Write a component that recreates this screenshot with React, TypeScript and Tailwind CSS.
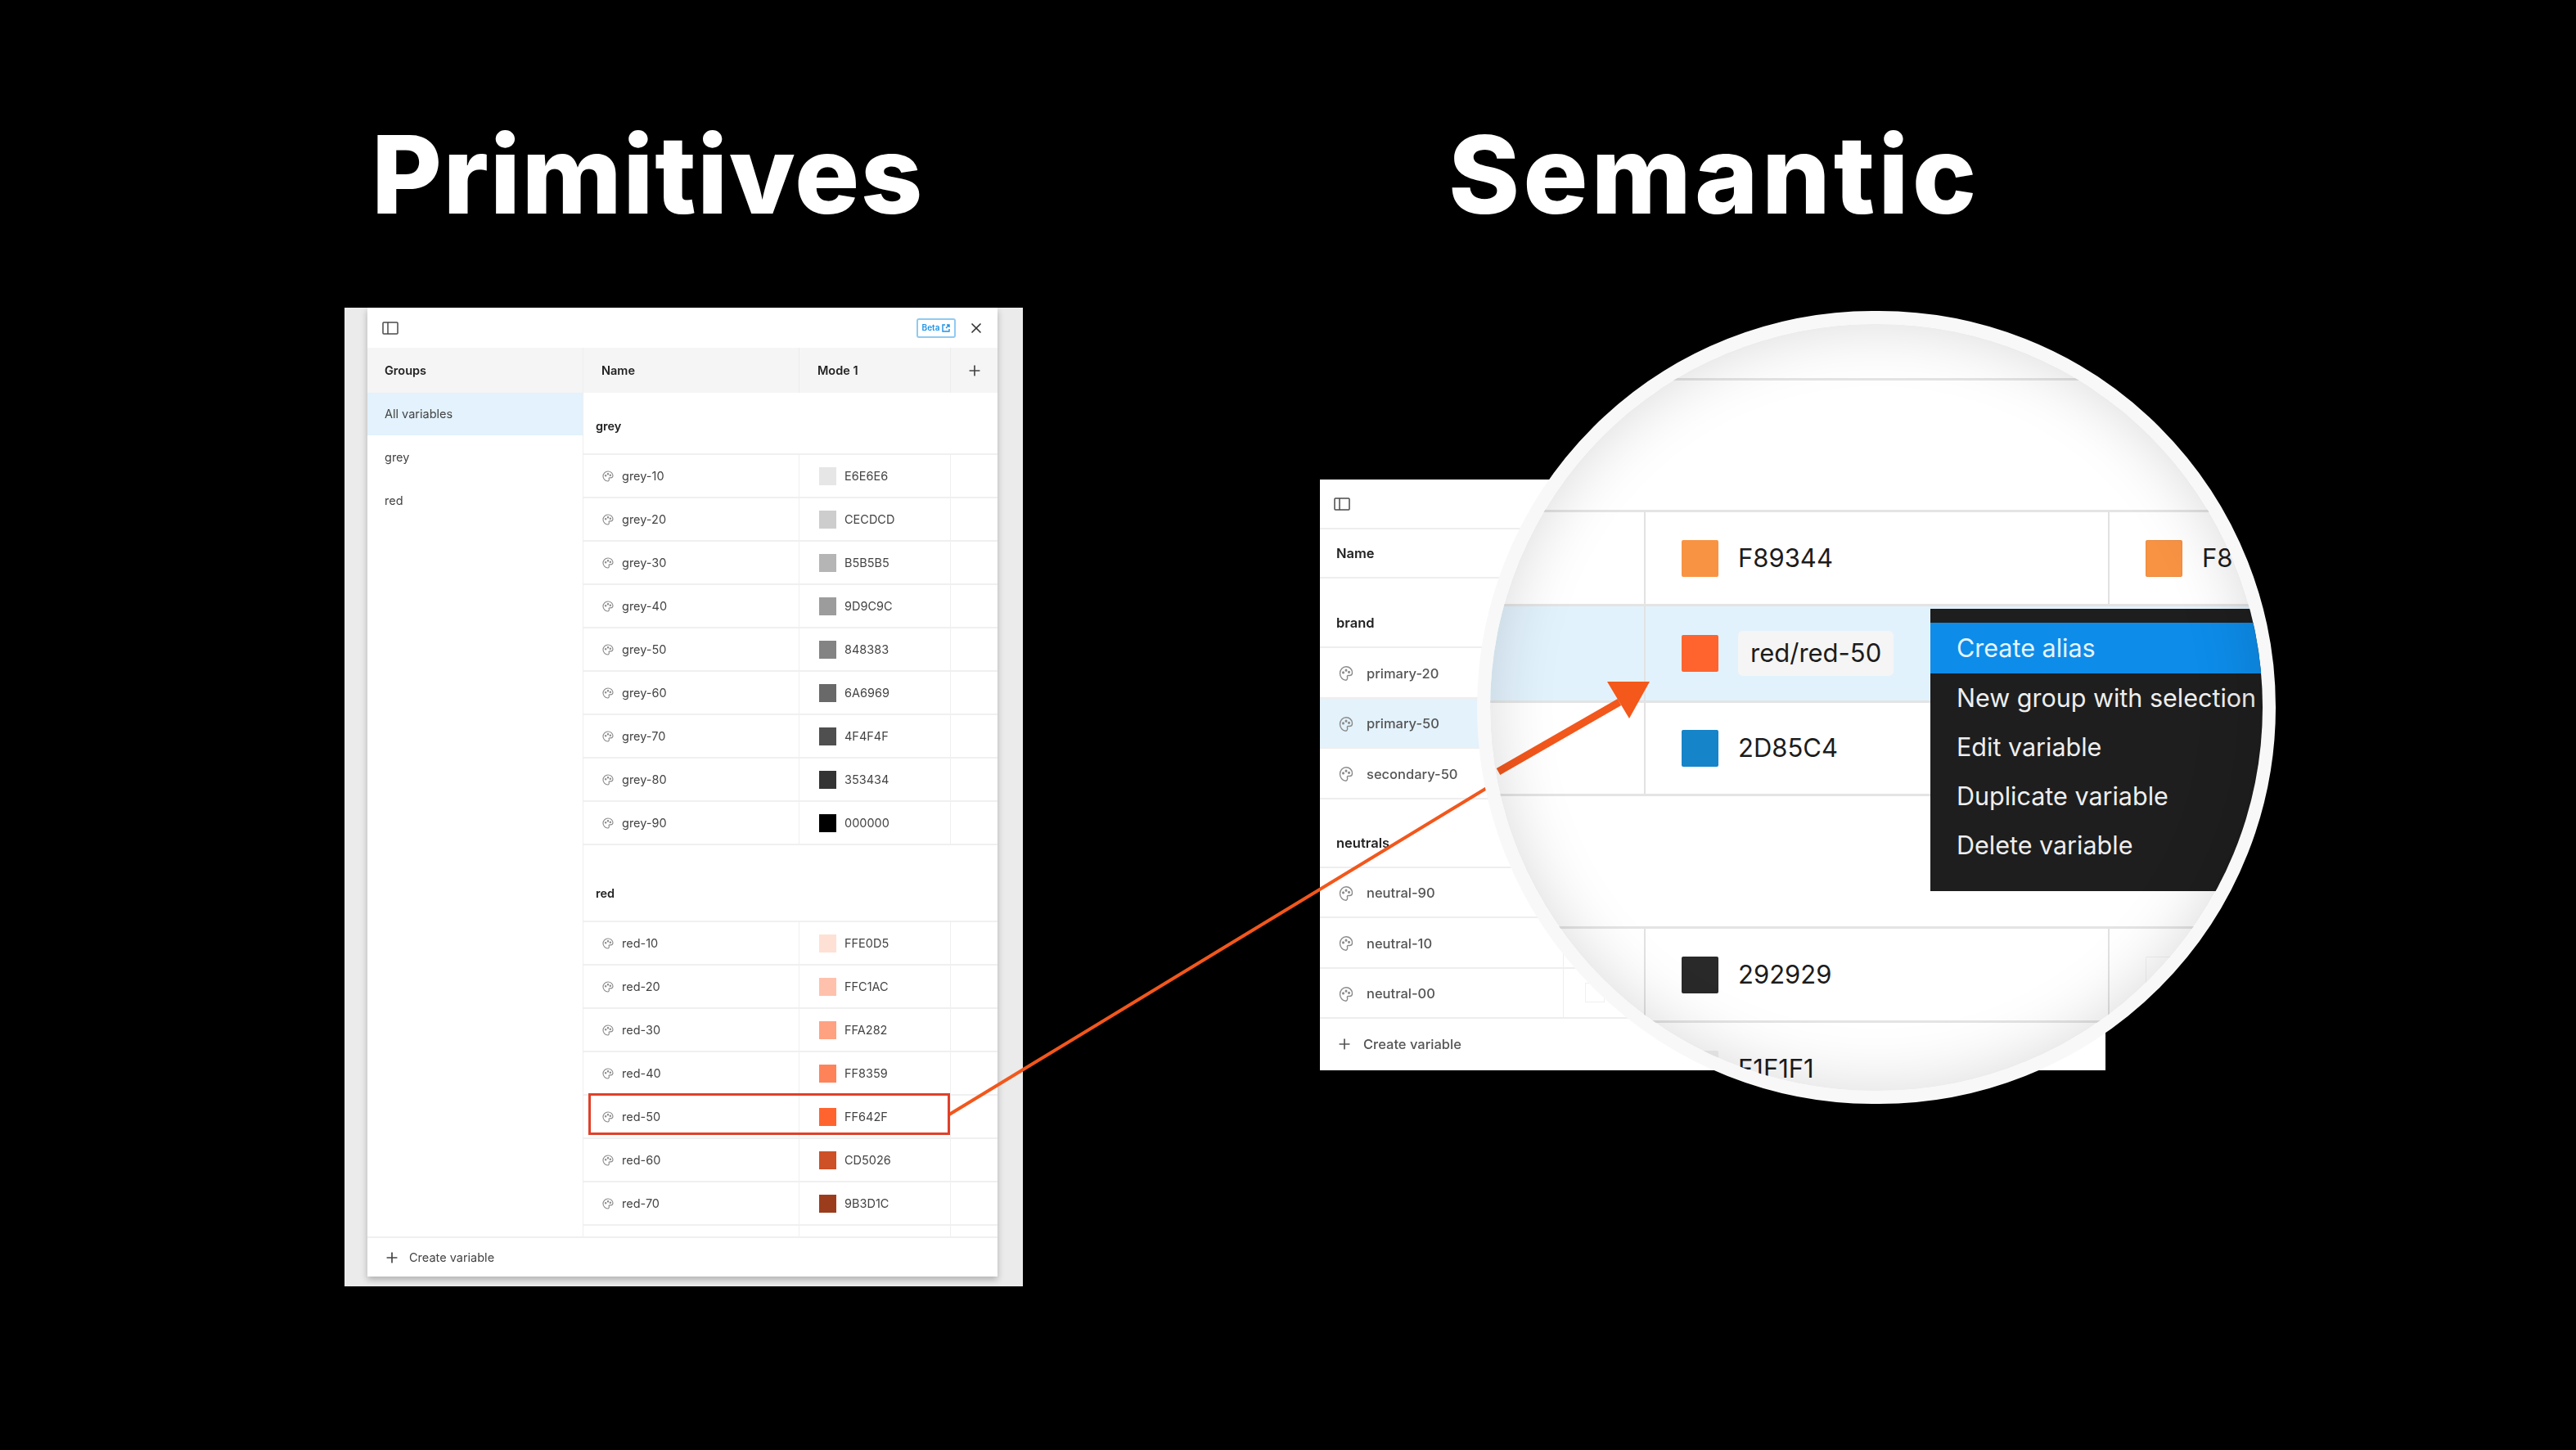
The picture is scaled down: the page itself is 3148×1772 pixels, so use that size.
import { Plus, X } from 'lucide-react';

const greyRows = [
  { name: 'grey-10', hex: 'E6E6E6' },
  { name: 'grey-20', hex: 'CECDCD' },
  { name: 'grey-30', hex: 'B5B5B5' },
  { name: 'grey-40', hex: '9D9C9C' },
  { name: 'grey-50', hex: '848383' },
  { name: 'grey-60', hex: '6A6969' },
  { name: 'grey-70', hex: '4F4F4F' },
  { name: 'grey-80', hex: '353434' },
  { name: 'grey-90', hex: '000000' },
];

const redRows = [
  { name: 'red-10', hex: 'FFE0D5' },
  { name: 'red-20', hex: 'FFC1AC' },
  { name: 'red-30', hex: 'FFA282' },
  { name: 'red-40', hex: 'FF8359' },
  { name: 'red-50', hex: 'FF642F' },
  { name: 'red-60', hex: 'CD5026' },
  { name: 'red-70', hex: '9B3D1C' },
];

const menuItems = ['New group with selection', 'Edit variable', 'Duplicate variable', 'Delete variable'];

function PaletteIcon({ className }: { className: string }) {
  return (
    <svg viewBox="0 0 20 20" fill="none" stroke="#8a8a8a" strokeWidth="1.4" className={className} preserveAspectRatio="none">
      <path d="M10 2.5c4.4 0 7.5 3 7.5 6.6 0 2-1.6 3.2-3.4 3.2h-1.6c-1 0-1.4.8-1 1.6.5 1.2-.2 3.6-1.9 3.6C5.8 17.5 2.5 14 2.5 10S5.6 2.5 10 2.5Z" />
      <circle cx="6.5" cy="9" r="0.8" fill="#8a8a8a" />
      <circle cx="10" cy="6.5" r="0.8" fill="#8a8a8a" />
      <circle cx="13.5" cy="8.5" r="0.8" fill="#8a8a8a" />
    </svg>
  );
}

function SidebarIcon({ className }: { className: string }) {
  return (
    <svg viewBox="0 0 20 16" fill="none" stroke="#4a4a4a" strokeWidth="1.5" className={className}>
      <rect x="1" y="1" width="18" height="14" rx="1" />
      <path d="M7 1v14" />
    </svg>
  );
}

function PrimitiveRow({ name, hex }: { name: string; hex: string }) {
  return (
    <div className="flex h-[53px] border-b-2 border-[#f0f0f0] text-[14.5px] text-[#444444]">
      <div className="flex w-[264px] items-center gap-[9px] border-r border-[#efefef] pl-[22px]">
        <PaletteIcon className="h-4 w-4" />
        <span>{name}</span>
      </div>
      <div className="flex w-[185px] items-center gap-[10px] border-r border-[#efefef] pl-6">
        <div className="h-[22px] w-[21px]" style={{ backgroundColor: `#${hex}` }} />
        <span>{hex}</span>
      </div>
    </div>
  );
}

function SemanticRow({ name, active, cell, swatch }: { name: string; active?: boolean; cell?: boolean; swatch?: boolean }) {
  return (
    <div className={`flex h-[61.5px] items-center gap-[15px] border-b-2 border-[#eeeeee] pl-[22px] text-[16.5px] font-medium text-[#555555] ${active ? 'bg-[#e3f2fb]' : ''}`}>
      <PaletteIcon className="mt-[3px] h-[22px] w-5" />
      <span className="mt-[3px] w-[225px]">{name}</span>
      {cell && (
        <div className="flex h-full items-center border-l border-[#eeeeee] pl-[26px]">
          {swatch && <div className="h-6 w-6 border border-[#f0f0f0]" />}
        </div>
      )}
    </div>
  );
}

function MagnifiedRow({ color, value, height, secondColor, secondValue, pill }: { color: string; value: string; height: string; secondColor?: string; secondValue?: string; pill?: boolean }) {
  return (
    <div className={`flex border-b-[3px] border-[#e4e4e4] text-[31px] text-[#1c1c1c] ${height} ${pill ? 'bg-[#e2f2fc]' : ''}`}>
      <div className="w-[188px] shrink-0" />
      <div className="flex w-[567px] shrink-0 items-center gap-[24px] border-l-2 border-[#e2e2e2] pl-[44px]">
        <div className="h-[45px] w-[45px] rounded-[2px]" style={{ backgroundColor: color }} />
        {pill ? <span className="rounded-[6px] bg-[#f5f5f5] px-[15px] py-[4px]">{value}</span> : <span>{value}</span>}
      </div>
      {secondColor && (
        <div className="flex shrink-0 items-center gap-[24px] border-l-2 border-[#e2e2e2] pl-[44px]">
          <div className="h-[45px] w-[45px] rounded-[2px] border border-black/5" style={{ backgroundColor: secondColor }} />
          {secondValue && <span>{secondValue}</span>}
        </div>
      )}
    </div>
  );
}

export default function App() {
  return (
    <div className="relative flex h-[1772px] w-[3148px] overflow-hidden bg-black font-['Inter',sans-serif]">
      {/* left column */}
      <div className="ml-[421px] w-[829px]">
        <div className="flex h-[376px] items-start pt-[133px] pl-[33px]">
          <h1 className="text-[132px] leading-[160px] font-extrabold tracking-[1.4px] text-white">Primitives</h1>
        </div>
        <div className="bg-[#ebebeb] pr-[31px] pb-[12px] pl-[28px]">
          <div className="flex h-[1184px] flex-col bg-white shadow-[0_4px_8px_rgba(0,0,0,0.25)] blur-[0.5px]">
            <div className="flex h-[49px] items-center justify-between pr-4 pl-[18px]">
              <SidebarIcon className="h-[16px] w-[20px]" />
              <div className="flex items-center gap-[15px]">
                <span className="flex h-6 w-12 items-center justify-center gap-[3px] rounded-[3px] border-2 border-[#8fcbf2] text-[10px] font-semibold text-[#1b93e6]">
                  Beta
                  <svg viewBox="0 0 10 10" fill="none" stroke="#1b93e6" strokeWidth="1.4" className="h-[10px] w-[10px]">
                    <path d="M4 1H1v8h8V6M5 5l4-4M6 1h3v3" />
                  </svg>
                </span>
                <X className="h-[20px] w-[20px] text-[#333333]" />
              </div>
            </div>

            <div className="flex min-h-0 flex-1">
              {/* groups */}
              <div className="w-[264px] border-r border-[#eeeeee] text-[14.5px] text-[#444444]">
                <div className="flex h-[55px] items-center bg-[#f5f5f5] pl-[21px] font-semibold text-[#222222]">Groups</div>
                <div className="flex h-[52px] items-center bg-[#e3f2fc] pl-[21px]">All variables</div>
                <div className="flex h-[53px] items-center pl-[21px]">grey</div>
                <div className="flex h-[53px] items-center pl-[21px]">red</div>
              </div>

              {/* table */}
              <div className="min-w-0 flex-1">
                <div className="flex h-[55px] items-center bg-[#f5f5f5] text-[14.5px] font-semibold text-[#222222]">
                  <div className="flex h-full w-[264px] items-center border-r border-[#ececec] pl-[22px]">Name</div>
                  <div className="flex h-full w-[185px] items-center border-r border-[#ececec] pl-[22px]">Mode 1</div>
                  <div className="flex flex-1 justify-center">
                    <Plus className="h-[20px] w-[20px] text-[#444444]" />
                  </div>
                </div>
                <div className="flex h-[76px] items-end border-b-2 border-[#f0f0f0] pb-[22px] pl-[15px] text-[14.5px] font-semibold text-[#222222]">grey</div>
                {greyRows.map((row) => (
                  <PrimitiveRow key={row.name} name={row.name} hex={row.hex} />
                ))}
                <div className="flex h-[94px] items-end border-b-2 border-[#f0f0f0] pb-[22px] pl-[15px] text-[14.5px] font-semibold text-[#222222]">red</div>
                {redRows.map((row) => (
                  <PrimitiveRow key={row.name} name={row.name} hex={row.hex} />
                ))}
                <div className="flex h-[13px]">
                  <div className="w-[264px] border-r border-[#efefef]" />
                  <div className="w-[185px] border-r border-[#efefef]" />
                </div>
              </div>
            </div>

            <div className="flex h-[49px] shrink-0 items-center gap-[11px] border-t-2 border-[#f0f0f0] pl-[20px] text-[14.5px] text-[#444444]">
              <Plus className="h-[20px] w-[20px]" />
              <span>Create variable</span>
            </div>
          </div>
        </div>
      </div>

      {/* right column */}
      <div className="ml-[363px] w-[960px]">
        <div className="flex h-[586px] items-start pt-[133px] pl-[157px]">
          <h1 className="text-[132px] leading-[160px] font-extrabold tracking-[4.1px] text-white">Semantic</h1>
        </div>
        <div className="h-[722px] bg-white blur-[0.4px]">
          <div className="flex h-[61px] items-center border-b-2 border-[#eeeeee] pl-[16px]">
            <SidebarIcon className="h-[16px] w-[22px]" />
          </div>
          <div className="flex h-[60px] items-center border-b-2 border-[#eeeeee] pl-[20px] text-[16.5px] font-semibold text-[#222222]">Name</div>
          <div className="flex h-[85px] items-end border-b-2 border-[#eeeeee] pb-[16px] pl-[20px] text-[16.5px] font-semibold text-[#222222]">brand</div>
          <SemanticRow name="primary-20" />
          <SemanticRow name="primary-50" active />
          <SemanticRow name="secondary-50" />
          <div className="flex h-[84px] items-end border-b-2 border-[#eeeeee] pb-[16px] pl-[20px] text-[16.5px] font-semibold text-[#222222]">neutrals</div>
          <SemanticRow name="neutral-90" />
          <SemanticRow name="neutral-10" cell />
          <SemanticRow name="neutral-00" cell swatch />
          <div className="flex h-[62px] items-center gap-[13px] pl-[20px] text-[16.5px] font-medium text-[#555555]">
            <Plus className="h-[20px] w-[20px]" />
            <span>Create variable</span>
          </div>
        </div>
      </div>

      {/* thin leader from the highlighted row */}
      <svg viewBox="0 0 3148 1772" className="absolute inset-0 h-[1772px] w-[3148px]">
        <path d="M1160 1362L1830 955" stroke="#f2571c" strokeWidth="4" />
      </svg>

      {/* highlight box on red-50 */}
      <div className="absolute top-[1336px] left-[719px] h-[51px] w-[442px] border-[3px] border-[#e0402a]" />

      {/* magnifier */}
      <div className="absolute top-[380px] left-[1805px] h-[969px] w-[976px] overflow-hidden rounded-full border-[16px] border-[#f8f8f8] bg-white">
        <div className="h-[69px] border-b-[3px] border-[#e4e4e4]" />
        <div className="h-[161px] border-b-[3px] border-[#e4e4e4]" />
        <MagnifiedRow height="h-[115px]" color="#F89344" value="F89344" secondColor="#F89344" secondValue="F8" />
        <MagnifiedRow height="h-[118px]" color="#FF642F" value="red/red-50" pill />
        <MagnifiedRow height="h-[114px]" color="#1684C8" value="2D85C4" />
        <div className="h-[162px] border-b-[3px] border-[#e4e4e4]" />
        <MagnifiedRow height="h-[115px]" color="#292929" value="292929" secondColor="#FFFFFF" />
        <MagnifiedRow height="h-[115px]" color="#F1F1F1" value="F1F1F1" />

        {/* context menu */}
        <div className="absolute top-[348px] left-[538px] h-[345px] w-[430px] bg-[#1e1e1e] pt-[17px] text-[30.5px] text-[#eeeeee]">
          <div className="flex h-[62px] items-center bg-[#0d8ce9] pl-[32px] text-[#e6f4fe]">Create alias</div>
          {menuItems.map((item) => (
            <div key={item} className="flex h-[60px] items-center pl-[32px] whitespace-nowrap">
              {item}
            </div>
          ))}
        </div>

        {/* arrow head end of the leader */}
        <svg viewBox="0 0 944 937" className="absolute inset-0 h-[937px] w-[944px]">
          <path d="M10 547L158 462" stroke="#f2571c" strokeWidth="9" />
          <path d="M143 437H195L170 482Z" fill="#f4581a" />
        </svg>

        {/* soft lens shading */}
        <div className="pointer-events-none absolute inset-0 rounded-full shadow-[inset_0_0_80px_rgba(0,0,0,0.15)]" />
      </div>
    </div>
  );
}
